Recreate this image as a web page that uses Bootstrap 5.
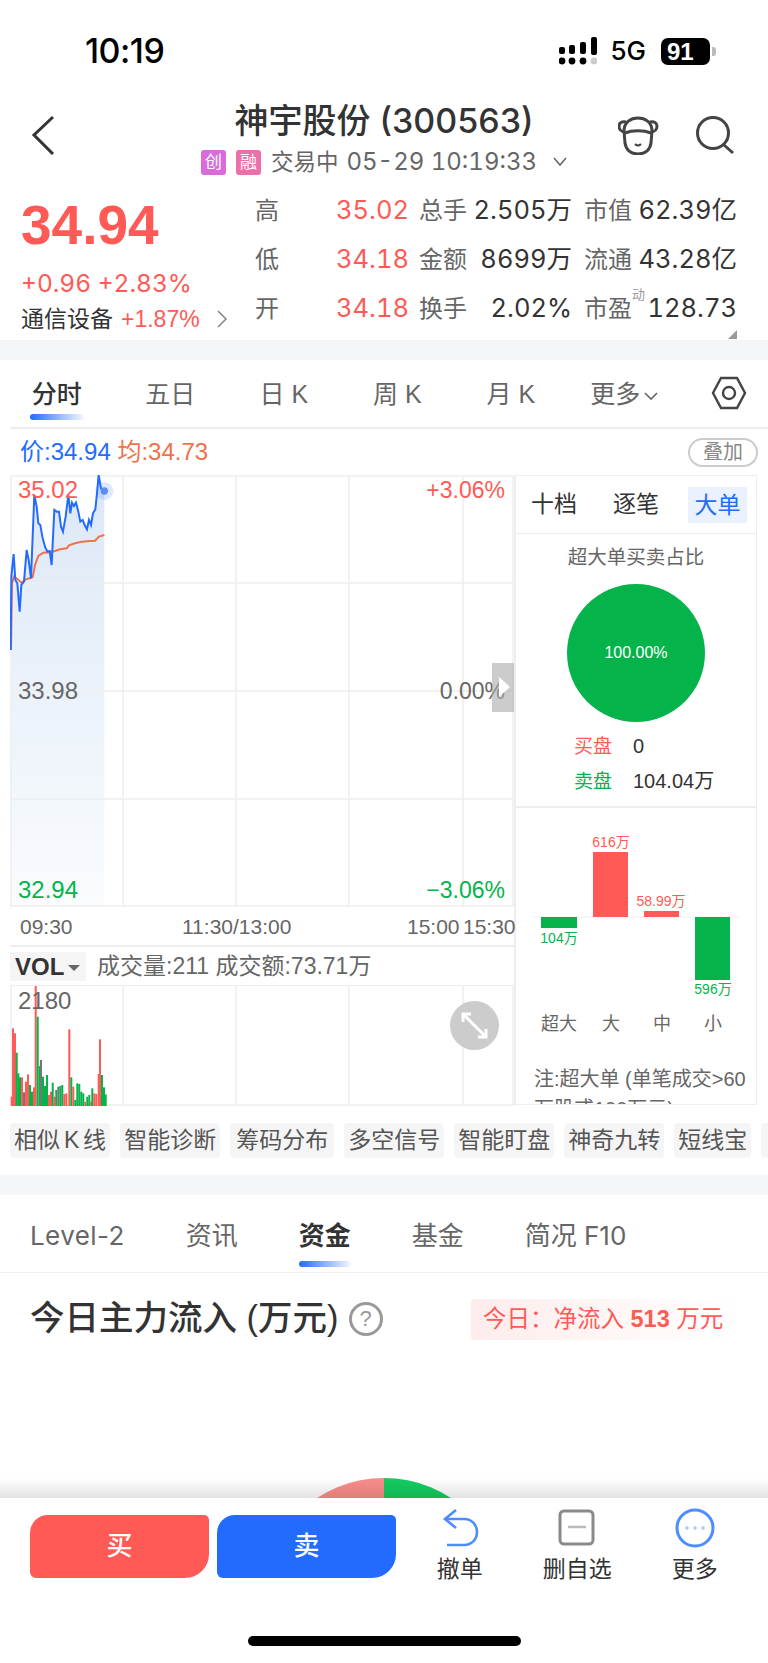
<!DOCTYPE html>
<html lang="zh-CN">
<head>
    <meta charset="UTF-8">
    <meta name="viewport" content="width=device-width, initial-scale=1.0">
    <title>神宇股份 (300563)</title>
    <link rel="stylesheet" href="https://cdn.jsdelivr.net/npm/bootstrap@5.3.0/dist/css/bootstrap.min.css">
    <style>
        body {
            margin: 0;
            width: 768px;
            height: 1663px;
            overflow: hidden;
            background: #fff;
            color: #333;
            font-family: "Liberation Sans", "Noto Sans CJK SC", sans-serif;
        }
        .c-red { color: #ff5a55; }
        .c-green { color: #05b34b; }
        .c-blue { color: #236bff; }
        .c-orange { color: #f0714a; }
        .c-gray { color: #666; }

        /* status bar */
        .status-bar { height: 95px; padding: 0 52px 0 85px; }
        .status-time { font-family: Inter, sans-serif; font-weight: 500; font-size: 34px; letter-spacing: -.5px; color: #000; line-height: 1; margin-top: 7px; }
        .status-right { margin-top: 7px; }
        .status-5g { font-family: Inter, sans-serif; font-weight: 500; font-size: 26px; color: #000; margin: 0 15px 0 13px; line-height: 1; }
        .batt { width: 49px; height: 27px; border-radius: 7px; background: #000; color: #fff; font-weight: 700; font-size: 24px; line-height: 27px; padding-left: 6px; }
        .batt-nub { width: 4px; height: 9px; background: #bbb; border-radius: 0 3px 3px 0; margin-left: 2px; }

        /* header */
        .stock-head { height: 87px; }
        .head-side { width: 150px; flex-shrink: 0; }
        .head-title { font-family: Inter, "Noto Sans CJK SC", sans-serif; font-size: 34px; font-weight: 500; line-height: 44px; color: #333; white-space: nowrap; margin-top: 4px; }
        .head-sub { font-family: Inter, "Noto Sans CJK SC", sans-serif; font-size: 22.5px; line-height: 30px; color: #666; margin-top: 4px; white-space: nowrap; }
        .head-clock { font-size: 24px; font-variant-numeric: tabular-nums; }
        .tag-chip { width: 25px; height: 25px; border-radius: 3px; color: #fff; font-size: 17px; line-height: 25px; text-align: center; margin-right: 10px; }
        .tag-a { background: #d96bdc; }
        .tag-b { background: #ee6ea9; }

        /* quote */
        .quote-box { height: 158px; position: relative; }
        .quote-left { width: 255px; padding-left: 21px; }
        .quote-price { font-size: 55px; font-weight: 700; line-height: 56px; color: #ff5a55; margin-top: 15px; }
        .quote-chg { font-family: Inter, sans-serif; font-size: 24.5px; line-height: 30px; margin-top: 15px; white-space: nowrap; font-variant-numeric: tabular-nums; }
        .quote-ind { font-size: 23px; line-height: 30px; margin-top: 6px; white-space: nowrap; }
        .quote-grid { display: grid; grid-template-columns: 40px 114px 58px 105px 62px 103px; grid-auto-rows: 49px; align-items: center; padding-top: 4px; font-family: Inter, "Noto Sans CJK SC", sans-serif; font-size: 25.5px; font-variant-numeric: tabular-nums; white-space: nowrap; }
        .q-lab { font-size: 24px; color: #666; }
        .q-lab2 { padding-left: 10px; }
        .q-lab3 { padding-left: 12px; position: relative; }
        .q-val { text-align: right; }
        .q-sup { position: absolute; left: 60px; top: -6px; font-size: 13px; color: #999; }
        .corner-tri { position: absolute; right: 31px; bottom: 1px; width: 0; height: 0; border-left: 9px solid transparent; border-bottom: 9px solid #999; }
        .gap-band { height: 20px; background: #f5f6f8; }

        /* period tabs */
        .period-tabs { height: 69px; border-bottom: 2px solid #eee; margin-left: 10px; }
        .period-cell { width: 113.5px; text-align: center; font-size: 25px; line-height: 34px; color: #666; position: relative; padding-top: 17px; height: 67px; white-space: nowrap; }
        .period-cell:first-child { margin-left: -10px; }
        .period-on { color: #333; font-weight: 500; }
        .under-bar { position: absolute; height: 6px; border-radius: 3px; background: linear-gradient(90deg, #236bff, rgba(35,107,255,.05)); }
        .period-on .under-bar { left: 30px; width: 54px; bottom: 7px; }
        .hex-icon { margin: 16px 0 0 30px; }

        /* price row */
        .price-row { height: 46px; padding: 0 10px 0 20px; font-size: 24px; }
        .stack-pill { width: 70px; height: 29px; border: 2px solid #ccc; border-radius: 15px; font-size: 20px; line-height: 25px; text-align: center; color: #888; }

        /* chart */
        .chart-wrap { margin-left: 10px; }
        .chart-left { width: 504px; }
        .canvas-box { position: relative; }
        .canvas-box svg { display: block; }
        .ch-lab { position: absolute; font-size: 24px; line-height: 26px; }
        .ch-lab-r { font-size: 23px; right: 9px; }
        .slide-handle { position: absolute; right: 0; top: 188px; width: 22px; height: 49px; background: rgba(170,170,170,.6); }
        .slide-handle::after { content: ""; position: absolute; left: 7px; top: 14px; border-left: 11px solid #fff; border-top: 10px solid transparent; border-bottom: 10px solid transparent; }
        .time-row { height: 40px; border-bottom: 2px solid #eee; font-size: 21px; line-height: 40px; color: #666; position: relative; }
        .time-row span { position: absolute; top: 0; white-space: nowrap; }
        .vol-row { height: 39px; font-size: 23px; color: #666; border-bottom: 1px solid #eee; }
        .vol-pick { width: 76px; height: 29px; background: #f5f5f5; font-weight: 700; font-size: 24px; line-height: 29px; color: #333; padding-left: 5px; margin-right: 11px; }
        .vol-caret { display: inline-block; border-top: 6px solid #666; border-left: 6px solid transparent; border-right: 6px solid transparent; vertical-align: middle; margin-left: 4px; }
        .expand-btn { position: absolute; left: 440px; top: 15px; width: 49px; height: 49px; border-radius: 50%; background: #ccc; }

        /* side panel */
        .side-panel { width: 243px; height: 630px; border: 1px solid #eee; border-width: 1px 1px 1px 2px; overflow: hidden; }
        .side-tabs { height: 58px; border-bottom: 1px solid #eee; padding: 0 9px 0 15px; font-size: 23px; gap: 36px; }
        .side-on { width: 59px; height: 36px; background: #eaf1ff; color: #236bff; text-align: center; line-height: 36px; margin-left: -7px; }
        .pie-sec { height: 274px; border-bottom: 2px solid #eee; }
        .pie-title { font-size: 19.5px; line-height: 24px; color: #666; text-align: center; padding-top: 11px; height: 50px; }
        .pie-disc { width: 138px; height: 138px; border-radius: 50%; background: #05b34b; color: #fff; font-size: 16px; line-height: 138px; text-align: center; margin: 0 auto; }
        .pie-leg { font-size: 20px; line-height: 34px; padding-left: 58px; margin-top: 7px; white-space: nowrap; }
        .pie-leg span:first-child { display: inline-block; width: 59px; font-size: 19px; }
        .note-text { font-size: 20px; line-height: 30px; color: #666; padding: 0 2px 0 18px; }

        /* chips */
        .chip-row { height: 69px; padding: 17px 0 0 10px; gap: 10px; overflow: hidden; }
        .chip-item { flex-shrink: 0; height: 35px; background: #f5f5f5; border-radius: 4px; font-size: 23px; line-height: 35px; padding: 0 4px; color: #555; white-space: nowrap; }
        .chip-k { word-spacing: -2.5px; }
        .chip-wide { padding: 0 6px; }
        .chip-blank { width: 60px; }

        /* lower tabs */
        .sub-tabs { height: 78px; padding-left: 30px; gap: 61px; border-bottom: 1px solid #eee; font-family: Inter, "Noto Sans CJK SC", sans-serif; font-size: 26px; color: #666; }
        .sub-tab { position: relative; line-height: 34px; padding-top: 24px; height: 77px; white-space: nowrap; }
        .sub-wide { letter-spacing: .4px; }
        .sub-on { color: #333; font-weight: 700; }
        .sub-on .under-bar { left: 0; right: 0; bottom: 5px; }
        .flow-head { height: 92px; padding: 0 30px; }
        .flow-title { font-size: 34.5px; font-weight: 500; color: #333; white-space: nowrap; }
        .help-ring { width: 34px; height: 34px; border-radius: 50%; border: 3px solid #999; color: #999; font-size: 22px; line-height: 28px; text-align: center; margin-left: 10px; }
        .flow-pill { width: 267px; height: 41px; border-radius: 4px; background: linear-gradient(90deg, #ffecec, #fff); color: #ff5a55; font-size: 23.5px; line-height: 41px; padding-left: 12px; white-space: nowrap; }
        .peek-box { height: 133px; overflow: hidden; }
        .peek-box svg { display: block; }

        /* bottom bar */
        .action-bar { height: 165px; background: #fff; position: relative; }
        .trade-btn { width: 179px; height: 63px; border: 0; color: #fff; font-size: 26px; font-weight: 500; padding: 0; }
        .btn-buy, .btn-buy:hover { background: #ff5a55; color: #fff; border-radius: 18px 5px 24px 6px; }
        .btn-sell, .btn-sell:hover { background: #236bff; color: #fff; border-radius: 18px 5px 24px 6px; }
        .trade-wrap { padding: 17px 0 0 30px; gap: 8px; }
        .tool-wrap { margin-left: 5px; padding-top: 9px; }
        .tool-cell { width: 117.5px; text-align: center; font-size: 23px; line-height: 30px; color: #333; white-space: nowrap; }
        .tool-cell svg { display: block; margin: 0 auto 5px; }
        .home-bar { position: absolute; left: 248px; top: 138px; width: 273px; height: 10px; border-radius: 5px; background: #000; }
    </style>
</head>
<body>
    <!-- Status bar -->
    <div class="status-bar d-flex justify-content-between align-items-center">
        <div class="status-time">10:19</div>
        <div class="status-right d-flex align-items-center">
            <svg width="38" height="28" viewBox="0 0 38 28">
                <rect x="0" y="10" width="6" height="7" rx="2"/><rect x="10" y="8" width="6" height="9" rx="2"/><rect x="21" y="5" width="6" height="12" rx="2"/><rect x="32" y="0" width="6" height="18" rx="2"/>
                <circle cx="3" cy="24" r="3.4"/><circle cx="13" cy="24" r="3.4"/><circle cx="24" cy="24" r="3.4"/><circle cx="35" cy="24" r="3.4" fill="#ccc"/>
            </svg>
            <div class="status-5g">5G</div>
            <div class="batt">91</div>
            <div class="batt-nub"></div>
        </div>
    </div>

    <!-- Stock header -->
    <div class="stock-head d-flex">
        <div class="head-side ps-4">
            <svg width="40" height="60" viewBox="0 0 40 60">
                <polyline points="29,23 10,41 29,60" fill="none" stroke="#333" stroke-width="3" transform="translate(0 -1)"/>
            </svg>
        </div>
        <div class="flex-grow-1 text-center">
            <div class="head-title">神宇股份 (300563)</div>
            <div class="head-sub d-flex justify-content-center align-items-center">
                <span class="tag-chip tag-a">创</span><span class="tag-chip tag-b">融</span>
                <span class="me-2">交易中</span><span class="head-clock">05-29 10:19:33</span>
                <svg class="ms-3" width="14" height="10" viewBox="0 0 14 10"><polyline points="1,1 7,8 13,1" fill="none" stroke="#666" stroke-width="1.6"/></svg>
            </div>
        </div>
        <div class="head-side">
            <svg width="116" height="60" viewBox="0 0 116 60">
                <g fill="none" stroke="#444" stroke-width="3" transform="translate(0 22)">
                    <path d="M6 14 C6 5 13 1 20 1 C27 1 34 5 34 14 L33 26 C32 33 27 37 20 37 C13 37 8 33 7 26 Z"/>
                    <path d="M7 15 C3 15 1 12 1 9 C1 6 4 4 8 5 M33 15 C37 15 39 12 39 9 C39 6 36 4 32 5"/>
                    <path d="M7 16 C14 13 26 13 33 16"/>
                    <path d="M17 27 C19 29 21 29 23 27" stroke-width="2"/>
                </g>
                <g fill="none" stroke="#444" stroke-width="3" transform="translate(78 22)">
                    <circle cx="17" cy="16" r="15.5"/><line x1="28" y1="28" x2="37" y2="36"/>
                </g>
            </svg>
        </div>
    </div>

    <!-- Quote -->
    <div class="quote-box d-flex">
        <div class="quote-left">
            <div class="quote-price">34.94</div>
            <div class="quote-chg c-red">+0.96 +2.83%</div>
            <div class="quote-ind d-flex align-items-center">
                <span>通信设备</span><span class="c-red ms-2">+1.87%</span>
                <svg class="ms-3" width="12" height="20" viewBox="0 0 12 20"><polyline points="2,2 10,10 2,18" fill="none" stroke="#888" stroke-width="1.6"/></svg>
            </div>
        </div>
        <div class="quote-grid">
            <span class="q-lab">高</span><span class="q-val c-red">35.02</span><span class="q-lab q-lab2">总手</span><span class="q-val">2.505万</span><span class="q-lab q-lab3">市值</span><span class="q-val">62.39亿</span>
            <span class="q-lab">低</span><span class="q-val c-red">34.18</span><span class="q-lab q-lab2">金额</span><span class="q-val">8699万</span><span class="q-lab q-lab3">流通</span><span class="q-val">43.28亿</span>
            <span class="q-lab">开</span><span class="q-val c-red">34.18</span><span class="q-lab q-lab2">换手</span><span class="q-val">2.02%</span><span class="q-lab q-lab3">市盈<span class="q-sup">动</span></span><span class="q-val">128.73</span>
        </div>
        <div class="corner-tri"></div>
    </div>
    <div class="gap-band"></div>

    <!-- Period tabs -->
    <div class="period-tabs d-flex">
        <div class="period-cell period-on">分时<div class="under-bar"></div></div>
        <div class="period-cell">五日</div>
        <div class="period-cell">日 K</div>
        <div class="period-cell">周 K</div>
        <div class="period-cell">月 K</div>
        <div class="period-cell">更多<svg class="ms-1" width="14" height="9" viewBox="0 0 14 9"><polyline points="1,1 7,7 13,1" fill="none" stroke="#666" stroke-width="1.6"/></svg></div>
        <svg class="hex-icon" width="36" height="34" viewBox="0 0 36 34">
            <polygon points="2,17 10,2 26,2 34,17 26,32 10,32" fill="none" stroke="#444" stroke-width="2.4"/>
            <circle cx="18" cy="17" r="6" fill="none" stroke="#444" stroke-width="2.4"/>
        </svg>
    </div>

    <!-- Price row -->
    <div class="price-row d-flex justify-content-between align-items-center">
        <div><span class="c-blue">价:34.94</span> <span class="c-orange">均:34.73</span></div>
        <div class="stack-pill">叠加</div>
    </div>

    <div class="chart-wrap d-flex">
        <div class="chart-left">
            <!-- Intraday chart -->
            <div class="canvas-box">
                <svg width="504" height="432" viewBox="0 0 504 432">
                    <defs>
                        <linearGradient id="areaFill" x1="0" y1="0" x2="0" y2="1">
                            <stop offset="0" stop-color="#dce8f6"/>
                            <stop offset="1" stop-color="#fafcfe"/>
                        </linearGradient>
                    </defs>
                    <g transform="translate(-10 -5) scale(.3333)">
                        <polygon fill="url(#areaFill)" points="32,540 34,320 41,252 46,330 52,340 59,425 64,345 72,335 80,240 86,270 93,325 103,75 110,110 115,160 121,165 127,200 135,230 142,245 149,243 155,285 163,120 170,125 177,125 183,170 189,185 197,140 205,75 211,130 216,98 222,108 228,98 235,125 241,155 248,150 254,165 261,178 267,150 273,165 279,130 286,118 291,70 296,15 303,55 313,63 313,1311 32,1311"/>
                    </g>
                    <g stroke="#eee" stroke-width="1.5" fill="none">
                        <rect x="1" y="1" width="502" height="430"/>
                        <line x1="1" y1="108" x2="503" y2="108"/><line x1="1" y1="216" x2="503" y2="216"/><line x1="1" y1="324" x2="503" y2="324"/>
                        <line x1="113" y1="1" x2="113" y2="431"/><line x1="226" y1="1" x2="226" y2="431"/><line x1="339" y1="1" x2="339" y2="431"/><line x1="453" y1="1" x2="453" y2="431"/>
                    </g>
                    <g transform="translate(-10 -5) scale(.3333)">
                        <polyline fill="none" stroke="#f0714a" stroke-width="6" points="33,540 36,340 42,320 52,327 65,338 78,328 98,322 105,285 115,258 130,248 150,247 165,243 180,238 200,235 207,226 225,220 245,215 270,213 285,212 297,200 313,195"/>
                        <polyline fill="none" stroke="#236bff" stroke-width="6" points="32,540 34,320 41,252 46,330 52,340 59,425 64,345 72,335 80,240 86,270 93,325 103,75 110,110 115,160 121,165 127,200 135,230 142,245 149,243 155,285 163,120 170,125 177,125 183,170 189,185 197,140 205,75 211,130 216,98 222,108 228,98 235,125 241,155 248,150 254,165 261,178 267,150 273,165 279,130 286,118 291,70 296,15 303,55 313,63"/>
                        <circle cx="313" cy="63" r="27" fill="#236bff" opacity=".15"/>
                        <circle cx="313" cy="63" r="11" fill="#5b8df0"/>
                    </g>
                </svg>
                <span class="ch-lab c-red" style="left:8px;top:2px">35.02</span>
                <span class="ch-lab ch-lab-r c-red" style="top:2px">+3.06%</span>
                <span class="ch-lab c-gray" style="left:8px;top:203px">33.98</span>
                <span class="ch-lab ch-lab-r c-gray" style="top:203px">0.00%</span>
                <span class="ch-lab c-green" style="left:8px;top:402px">32.94</span>
                <span class="ch-lab ch-lab-r c-green" style="top:402px">−3.06%</span>
                <div class="slide-handle"></div>
            </div>
            <div class="time-row">
                <span style="left:10px">09:30</span>
                <span style="left:172px">11:30/13:00</span>
                <span style="left:397px">15:00</span>
                <span style="left:453px">15:30</span>
            </div>
            <div class="vol-row d-flex align-items-center">
                <div class="vol-pick">VOL<span class="vol-caret"></span></div>
                <span>成交量:211 成交额:73.71万</span>
            </div>
            <!-- Volume chart -->
            <div class="canvas-box">
                <svg id="volSvg" width="504" height="120" viewBox="0 0 504 120">
                    <g stroke="#eee" stroke-width="1.5" fill="none">
                        <line x1="1" y1="0" x2="1" y2="120"/><line x1="503" y1="0" x2="503" y2="120"/>
                        <line x1="0" y1="119" x2="504" y2="119"/>
                        <line x1="113" y1="0" x2="113" y2="120"/><line x1="226" y1="0" x2="226" y2="120"/><line x1="339" y1="0" x2="339" y2="120"/><line x1="453" y1="0" x2="453" y2="120"/>
                    </g>
                </svg>
                <span class="ch-lab c-gray" style="left:8px;top:2px">2180</span>
                <div class="expand-btn">
                    <svg width="49" height="49" viewBox="0 0 49 49" fill="none" stroke="#fff" stroke-width="3">
                        <polyline points="13,21 13,13 21,13"/><line x1="13" y1="13" x2="36" y2="36"/><polyline points="36,28 36,36 28,36"/>
                    </svg>
                </div>
            </div>
        </div>

        <!-- Side panel -->
        <div class="side-panel">
            <div class="side-tabs d-flex align-items-center">
                <span>十档</span><span>逐笔</span><div class="side-on">大单</div>
            </div>
            <div class="pie-sec">
                <div class="pie-title">超大单买卖占比</div>
                <div class="pie-disc">100.00%</div>
                <div class="pie-leg">
                    <div><span class="c-red">买盘</span><span>0</span></div>
                    <div><span class="c-green">卖盘</span><span>104.04万</span></div>
                </div>
            </div>
            <svg class="d-block" width="241" height="256" viewBox="0 0 241 256" font-family="Liberation Sans, Noto Sans CJK SC, sans-serif" text-anchor="middle">
                <line x1="18" y1="109" x2="224" y2="109" stroke="#eee" stroke-width="1"/>
                <rect x="25" y="109" width="36" height="11" fill="#05b34b"/>
                <rect x="77" y="44" width="35" height="65" fill="#ff5a55"/>
                <rect x="128" y="103" width="35" height="6" fill="#ff5a55"/>
                <rect x="179" y="109" width="35" height="63" fill="#05b34b"/>
                <text x="43" y="135" font-size="14" fill="#05b34b">104万</text>
                <text x="95" y="39" font-size="14" fill="#ff5a55">616万</text>
                <text x="145" y="98" font-size="14" fill="#ff5a55">58.99万</text>
                <text x="197" y="186" font-size="14" fill="#05b34b">596万</text>
                <g font-size="18" fill="#666">
                    <text x="43" y="222">超大</text><text x="95" y="222">大</text><text x="146" y="222">中</text><text x="197" y="222">小</text>
                </g>
            </svg>
            <div class="note-text">注:超大单 (单笔成交&gt;60万股或100万元)</div>
        </div>
    </div>

    <!-- Tool chips -->
    <div class="chip-row d-flex">
        <div class="chip-item chip-k">相似 K 线</div>
        <div class="chip-item">智能诊断</div>
        <div class="chip-item chip-wide">筹码分布</div>
        <div class="chip-item">多空信号</div>
        <div class="chip-item">智能盯盘</div>
        <div class="chip-item">神奇九转</div>
        <div class="chip-item">短线宝</div>
        <div class="chip-item chip-blank"></div>
    </div>
    <div class="gap-band"></div>

    <!-- Detail tabs -->
    <div class="sub-tabs d-flex">
        <div class="sub-tab sub-wide">Level-2</div>
        <div class="sub-tab">资讯</div>
        <div class="sub-tab sub-on">资金<div class="under-bar"></div></div>
        <div class="sub-tab">基金</div>
        <div class="sub-tab">简况 F10</div>
    </div>
    <div class="flow-head d-flex justify-content-between align-items-center">
        <div class="d-flex align-items-center">
            <span class="flow-title">今日主力流入 (万元)</span>
            <span class="help-ring">?</span>
        </div>
        <div class="flow-pill">今日：净流入 <b class="fw-semibold">513</b> 万元</div>
    </div>
    <div class="peek-box">
        <svg width="768" height="133" viewBox="0 0 768 133">
            <defs>
                <linearGradient id="barShade" x1="0" y1="0" x2="0" y2="1">
                    <stop offset="0" stop-color="#000" stop-opacity="0"/>
                    <stop offset="1" stop-color="#000" stop-opacity=".11"/>
                </linearGradient>
            </defs>
            <path d="M384 113 A122 122 0 0 0 262 235 L384 235 Z" fill="#f98e8a"/>
            <path d="M384 113 A122 122 0 0 1 506 235 L384 235 Z" fill="#14cc60"/>
            <rect x="0" y="113" width="768" height="20" fill="url(#barShade)"/>
        </svg>
    </div>

    <!-- Bottom actions -->
    <div class="action-bar d-flex">
        <div class="trade-wrap d-flex align-items-start">
            <button class="btn trade-btn btn-buy" type="button">买</button>
            <button class="btn trade-btn btn-sell" type="button">卖</button>
        </div>
        <div class="tool-wrap d-flex align-items-start">
            <div class="tool-cell">
                <svg width="40" height="42" viewBox="0 0 40 42" fill="none" stroke="#4d8dff" stroke-width="2.6">
                    <polyline points="16,3 5,12 16,21"/><path d="M5 12 L24 12 C32 12 37 18 37 25 C37 32 32 38 24 38 L7 38"/>
                </svg>
                撤单
            </div>
            <div class="tool-cell">
                <svg width="40" height="42" viewBox="0 0 40 42" fill="none">
                    <rect x="3" y="4" width="33" height="33" rx="4" stroke="#8a8a8a" stroke-width="3"/>
                    <line x1="11" y1="20" x2="29" y2="20" stroke="#bbb" stroke-width="2.5"/>
                </svg>
                删自选
            </div>
            <div class="tool-cell">
                <svg width="40" height="42" viewBox="0 0 40 42" fill="none">
                    <circle cx="20" cy="21" r="18" stroke="#4d8dff" stroke-width="3"/>
                    <g fill="#a9c6ff"><circle cx="12" cy="21" r="1.8"/><circle cx="20" cy="21" r="1.8"/><circle cx="28" cy="21" r="1.8"/></g>
                </svg>
                更多
            </div>
        </div>
        <div class="home-bar"></div>
    </div>

    <script src="https://cdn.jsdelivr.net/npm/bootstrap@5.3.0/dist/js/bootstrap.bundle.min.js"></script>
    <script>
        // volume bars: x and top measured from the chart, r/g/n = up/down/flat
        const volData = [[32,350,'r'],[36,145,'r'],[42,160,'r'],[47,218,'g'],[52,280,'g'],[57,292,'g'],[63,292,'r'],[69,337,'n'],[75,305,'r'],[81,283,'r'],[87,315,'g'],[93,335,'g'],[99,322,'r'],[104,18,'r'],[110,110,'g'],[116,258,'g'],[120,240,'n'],[126,290,'g'],[132,318,'g'],[138,285,'g'],[144,345,'r'],[150,335,'r'],[155,308,'g'],[161,350,'r'],[166,330,'g'],[172,320,'n'],[178,318,'g'],[184,315,'g'],[190,342,'r'],[196,340,'r'],[205,148,'r'],[211,292,'g'],[217,320,'r'],[223,360,'g'],[229,310,'g'],[235,312,'g'],[241,335,'g'],[247,340,'g'],[253,365,'r'],[259,350,'g'],[265,345,'g'],[271,365,'r'],[274,325,'g'],[280,340,'r'],[286,342,'r'],[293,282,'r'],[297,178,'r'],[303,285,'g'],[309,322,'g'],[314,343,'g']];
        const volColors = { r: '#ff5a55', g: '#05b34b', n: '#777' };
        const volSvg = document.getElementById('volSvg');
        volData.forEach(([x, top, c]) => {
            const rect = document.createElementNS('http://www.w3.org/2000/svg', 'rect');
            rect.setAttribute('x', (x / 3 - 10).toFixed(1));
            rect.setAttribute('y', (top - 18) / 3);
            rect.setAttribute('width', 2);
            rect.setAttribute('height', (378 - top) / 3);
            rect.setAttribute('fill', volColors[c]);
            volSvg.appendChild(rect);
        });
    </script>
</body>
</html>
